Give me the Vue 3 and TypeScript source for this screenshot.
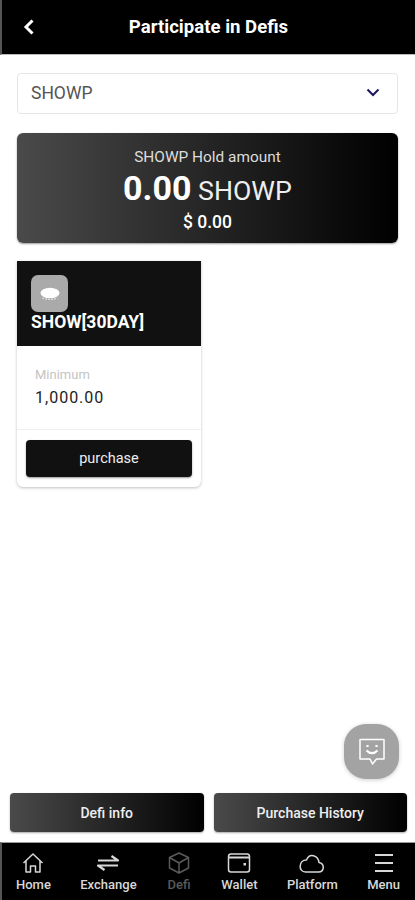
<script setup lang="ts">
const tabs = [
  { label: "Home", icon: "home" },
  { label: "Exchange", icon: "exchange" },
  { label: "Defi", icon: "defi" },
  { label: "Wallet", icon: "wallet" },
  { label: "Platform", icon: "platform" },
  { label: "Menu", icon: "menu" },
];
</script>

<template>
  <div class="page">
    <header class="topbar">
      <svg class="back" width="14" height="18" viewBox="0 0 14 18" fill="none">
        <path d="M10.5 2.5 L4 9 L10.5 15.5" stroke="#fff" stroke-width="3" />
      </svg>
      <h1>Participate in Defis</h1>
    </header>

    <main class="content">
      <div class="select">
        <span>SHOWP</span>
        <svg width="14" height="9" viewBox="0 0 14 9" fill="none">
          <path d="M1.5 1.5 L7 7 L12.5 1.5" stroke="#1c1560" stroke-width="2" />
        </svg>
      </div>

      <section class="hold">
        <div class="hold-title">SHOWP Hold amount</div>
        <div class="hold-amount"><b>0.00</b> SHOWP</div>
        <div class="hold-usd">$ 0.00</div>
      </section>

      <section class="card">
        <div class="card-head">
          <div class="coin">
            <svg width="20" height="14" viewBox="0 0 20 14">
              <ellipse cx="10" cy="6" rx="9.5" ry="5.2" fill="#fff" />
              <path d="M2.5 11 Q10 14 17.5 11" stroke="#eee" stroke-width="1.2" stroke-dasharray="1.5 1.5" fill="none" />
            </svg>
          </div>
          <div class="card-name">SHOW[30DAY]</div>
        </div>
        <div class="card-body">
          <div class="min-label">Minimum</div>
          <div class="min-value">1,000.00</div>
        </div>
        <div class="card-foot">
          <button class="purchase">purchase</button>
        </div>
      </section>
    </main>

    <button class="chat" aria-label="chat">
      <svg width="30" height="30" viewBox="0 0 30 30" fill="none" stroke="#fff" stroke-width="1.5">
        <path d="M3 2.5 H27 V22 H19.5 L15.5 27 L13 22 H3 Z" stroke-linejoin="round" />
        <path d="M10.5 8 V10 M19.5 8 V10" stroke-width="2.2" />
        <path d="M9.5 13.5 Q15 19 20.5 13.5" stroke-width="2.2" />
      </svg>
    </button>

    <div class="actions">
      <button>Defi info</button>
      <button>Purchase History</button>
    </div>

    <nav class="tabbar">
      <div v-for="tab in tabs" :key="tab.label" class="tab" :class="{ dim: tab.icon === 'defi' }">
        <svg width="26" height="24" viewBox="0 0 26 24" fill="none" stroke="currentColor" stroke-width="1.5" stroke-linejoin="round">
          <template v-if="tab.icon === 'home'">
            <path d="M3.5 12 L13 3 L22.5 12 M6 10 V21 H10.5 V15 H15.5 V21 H20 V10" />
          </template>
          <template v-else-if="tab.icon === 'exchange'">
            <path d="M3 9.5 H23 L16.5 5 M23 14.5 H3 L9.5 19" stroke-width="2.2" />
          </template>
          <template v-else-if="tab.icon === 'defi'">
            <path d="M13 2 L22.5 6.5 V17 L13 22 L3.5 17 V6.5 Z M3.5 6.5 L13 12 L22.5 6.5 M13 12 V22" />
          </template>
          <template v-else-if="tab.icon === 'wallet'">
            <path d="M5 3 H21 Q23.5 3 23.5 5.5 V18.5 Q23.5 21 21 21 H5 Q2.5 21 2.5 18.5 V5.5 Q2.5 3 5 3 Z" />
            <path d="M3 6.5 H23" stroke-width="2" />
            <rect x="17.5" y="12" width="2.5" height="2.5" fill="currentColor" stroke="none" />
          </template>
          <template v-else-if="tab.icon === 'platform'">
            <path d="M6.5 21 H19.5 C25.5 21 26 12.5 20 11.5 C19 4.5 10.5 1.5 7.5 9 C-0.5 9 -1 21 6.5 21 Z" />
          </template>
          <template v-else>
            <path d="M4 4 H22 M4 12 H22 M4 20 H22" stroke-width="2.2" />
          </template>
        </svg>
        <span>{{ tab.label }}</span>
      </div>
    </nav>
  </div>
</template>

<style scoped>
.page {
  position: relative;
  width: 415px;
  height: 900px;
  display: flex;
  flex-direction: column;
  background: #fff;
  font-family: Roboto, "Liberation Sans", sans-serif;
  overflow: hidden;
}

.topbar {
  height: 55px;
  flex: none;
  background: #000;
  border-left: 2px solid #555;
  border-bottom: 1px solid #bbb;
  box-sizing: border-box;
  display: flex;
  align-items: center;
  justify-content: center;
  position: relative;
}

.topbar h1 {
  margin: 0;
  color: #fff;
  font-size: 18.6px;
  font-weight: 700;
}

.back {
  position: absolute;
  left: 20px;
  top: 18px;
}

.content {
  flex: 1;
  padding: 18px 17px 0;
}

.select {
  height: 41px;
  box-sizing: border-box;
  border: 1px solid #e6e6e6;
  border-radius: 4px;
  display: flex;
  align-items: center;
  justify-content: space-between;
  padding: 0 17px 2px 13px;
  color: #555;
  font-size: 17.5px;
}

.hold {
  margin-top: 19px;
  height: 110px;
  border-radius: 6px;
  background: linear-gradient(90deg, #4a4a4a, #000);
  box-shadow: 0 1px 2px rgba(0, 0, 0, 0.4);
  color: #fff;
  text-align: center;
  padding-top: 15px;
  box-sizing: border-box;
}

.hold-title {
  font-size: 15.4px;
  line-height: 18px;
  color: #ddd;
}

.hold-amount {
  font-size: 26.7px;
  line-height: 40px;
  margin-top: 2px;
  color: #eee;
}

.hold-amount b {
  font-size: 34px;
  color: #fff;
}

.hold-usd {
  font-size: 17.5px;
  font-weight: 500;
  line-height: 20px;
  margin-top: 1px;
}

.card {
  margin-top: 18px;
  width: 184px;
  border-radius: 0 0 6px 6px;
  box-shadow: 0 1px 3px rgba(0, 0, 0, 0.25);
  background: #fff;
}

.card-head {
  height: 85px;
  background: #111;
  box-sizing: border-box;
  padding: 14px 14px 0;
}

.coin {
  width: 37px;
  height: 37px;
  border-radius: 7px;
  background: #aaa;
  display: flex;
  align-items: center;
  justify-content: center;
}

.card-name {
  color: #fff;
  font-size: 17.5px;
  font-weight: 700;
  line-height: 20px;
}

.card-body {
  height: 84px;
  box-sizing: border-box;
  padding: 21px 18px 0;
  border-bottom: 1px solid #eee;
}

.min-label {
  font-size: 13px;
  line-height: 16px;
  color: #c4c4c4;
}

.min-value {
  font-size: 16px;
  line-height: 22px;
  margin-top: 4px;
  color: #222;
  letter-spacing: 1px;
}

.card-foot {
  padding: 10px 9px 10px;
}

.purchase {
  display: block;
  width: 100%;
  height: 37px;
  border: 0;
  border-radius: 4px;
  background: #111;
  color: #eee;
  font: 400 14.5px Roboto, sans-serif;
  box-shadow: 0 1px 2px rgba(0, 0, 0, 0.4);
}

.chat {
  position: absolute;
  left: 344px;
  top: 724px;
  width: 55px;
  height: 55px;
  padding: 0;
  border: 0;
  border-radius: 22px;
  background: #a3a3a3;
  box-shadow: 0 1px 4px rgba(0, 0, 0, 0.2);
  display: flex;
  align-items: center;
  justify-content: center;
}

.actions {
  flex: none;
  display: flex;
  gap: 10px;
  padding: 0 8px 10px 10px;
}

.actions button {
  flex: 1;
  height: 39px;
  border: 0;
  border-radius: 4px;
  background: linear-gradient(90deg, #4a4a4a, #000);
  color: #eee;
  font: 500 14px Roboto, sans-serif;
  box-shadow: 0 1px 2px rgba(0, 0, 0, 0.35);
}

.tabbar {
  flex: none;
  height: 58px;
  box-sizing: border-box;
  background: #000;
  border-top: 1px solid #999;
  border-left: 2px solid #555;
  display: flex;
  justify-content: space-between;
  padding: 8px 15px 0 14px;
}

.tab {
  display: flex;
  flex-direction: column;
  align-items: center;
  color: #d8d8d8;
  font-size: 13px;
  font-weight: 500;
  line-height: 16px;
  gap: 2px;
}

.tab.dim {
  color: #5a5a5a;
}
</style>
